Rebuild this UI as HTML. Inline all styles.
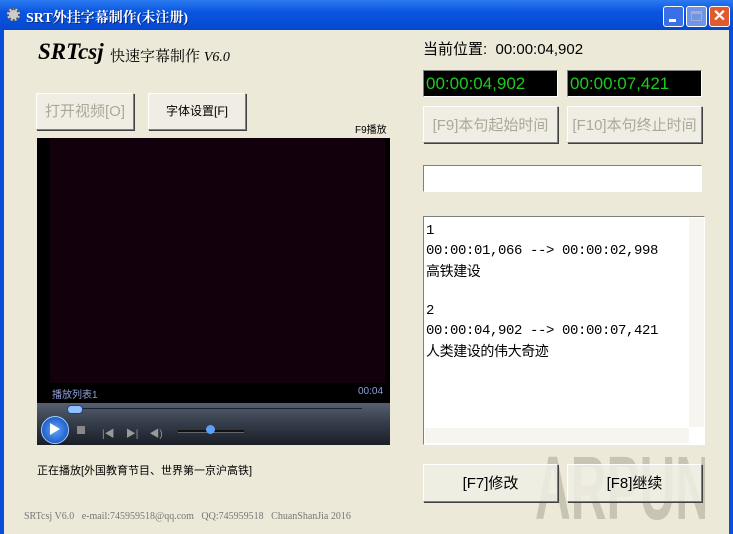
<html><head><style>
body{margin:0;width:733px;height:534px;overflow:hidden;background:#0a4fd8;font-family:"Liberation Sans","Noto Sans CJK SC",sans-serif;position:relative}
.a{position:absolute}
#body{left:4px;top:30px;width:725px;height:504px;background:#ece9d8}
.btn{position:absolute;background:#f0eee4;border:1px solid;border-color:#fff #808080 #808080 #fff;box-shadow:1px 1px 0 #404040;font-size:15px;text-align:center;box-sizing:border-box}
.dis{color:#aca899}
.green{position:absolute;background:#000;color:#21c821;font-size:17px;border:1px solid;border-color:#808080 #fff #fff #808080;box-sizing:border-box;padding:3px 0 0 2px}
.tb{position:absolute;top:6px;width:21px;height:21px;border:1px solid #fff;border-radius:3px;box-sizing:border-box;background:#3a6fe8}
</style></head><body>
<div class="a" style="left:0;top:0;width:733px;height:30px;background:linear-gradient(#2a7af0,#0a55e0 40%,#0548d0)"></div>
<div class="a" style="left:7px;top:8px;width:13px;height:13px;border-radius:50%;background:#ccc;border:2px dotted #555;box-sizing:border-box"></div>
<div class="a" style="left:26px;top:7px;color:#fff;font-weight:bold;font-size:14px;font-family:'Liberation Serif','Noto Serif CJK SC',serif;text-shadow:1px 1px #0a2a80">SRT外挂字幕制作(未注册)</div>
<div class="tb" style="left:663px"><div class="a" style="left:5px;top:12px;width:7px;height:3px;background:#fff"></div></div>
<div class="tb" style="left:686px;background:#6f95e8"><div class="a" style="left:4px;top:4px;width:11px;height:10px;border:1px solid #aac;border-top-width:3px;box-sizing:border-box"></div></div>
<div class="tb" style="left:709px;background:#e05a30;color:#fff;font-weight:bold;font-size:16px;text-align:center;line-height:19px">✕</div>
<div id="body" class="a"></div>
<div class="a" style="left:535px;top:444px;width:170px;height:90px;overflow:hidden"><div style="font-size:90px;font-weight:bold;color:#c8c4b4;line-height:90px;transform:scaleX(0.55);transform-origin:left;white-space:nowrap">ARPUN</div></div>
<div class="a" style="left:38px;top:39px;font-family:'Liberation Serif',serif;font-style:italic;font-weight:bold;font-size:23px">SRTcsj</div>
<div class="a" style="left:110px;top:45px;font-size:15px;font-family:'Noto Serif CJK SC',serif">快速字幕制作 <i style="font-family:'Liberation Serif',serif;font-size:14px">V6.0</i></div>
<div class="btn dis" style="left:36px;top:93px;width:98px;height:37px;line-height:35px">打开视频[O]</div>
<div class="btn" style="left:148px;top:93px;width:98px;height:37px;line-height:35px;font-size:12px">字体设置[F]</div>
<div class="a" style="left:355px;top:121px;font-size:10px">F9播放</div>
<div class="a" style="left:37px;top:138px;width:353px;height:307px;background:#000"></div>
<div class="a" style="left:50px;top:138px;width:335px;height:245px;background:#12000c"></div>
<div class="a" style="left:52px;top:386px;color:#8fa0d8;font-size:10px">播放列表1</div>
<div class="a" style="left:358px;top:386px;color:#8fa0d8;font-size:10px">00:04</div>
<div class="a" style="left:37px;top:403px;width:353px;height:42px;background:linear-gradient(#566070,#3a4250 40%,#1a1e26)"></div>
<div class="a" style="left:68px;top:408px;width:294px;height:1px;background:#1a2030"></div>
<div class="a" style="left:67px;top:405px;width:14px;height:7px;border-radius:4px;background:#8fc0ff;border:1px solid #204080"></div>
<div class="a" style="left:41px;top:416px;width:26px;height:26px;border-radius:50%;background:radial-gradient(#60a8ff,#0840b0);border:1px solid #9cf"></div>
<div class="a" style="left:50px;top:423px;width:0;height:0;border-left:10px solid #fff;border-top:6px solid transparent;border-bottom:6px solid transparent"></div>
<div class="a" style="left:77px;top:426px;width:8px;height:8px;background:#888"></div>
<div class="a" style="left:102px;top:425px;color:#999;font-size:10px">|◀ &nbsp;&nbsp; ▶| &nbsp;&nbsp; ◀)</div>
<div class="a" style="left:178px;top:430px;width:66px;height:2px;background:#111;border-bottom:1px solid #666"></div>
<div class="a" style="left:206px;top:425px;width:9px;height:9px;border-radius:50%;background:#5aa0ff"></div>
<div class="a" style="left:37px;top:462px;font-size:11px">正在播放[外国教育节目、世界第一京沪高铁]</div>
<div class="a" style="left:24px;top:511px;font-size:10px;color:#777;font-family:'Liberation Serif',serif">SRTcsj V6.0 &nbsp; e-mail:745959518@qq.com &nbsp; QQ:745959518 &nbsp; ChuanShanJia 2016</div>
<div class="a" style="left:423px;top:38px;font-size:15px">当前位置: &nbsp;00:00:04,902</div>
<div class="green" style="left:423px;top:70px;width:135px;height:27px">00:00:04,902</div>
<div class="green" style="left:567px;top:70px;width:135px;height:27px">00:00:07,421</div>
<div class="btn dis" style="left:423px;top:106px;width:135px;height:37px;line-height:37px">[F9]本句起始时间</div>
<div class="btn dis" style="left:567px;top:106px;width:135px;height:37px;line-height:37px">[F10]本句终止时间</div>
<div class="a" style="left:423px;top:165px;width:279px;height:27px;background:#fff;border:1px solid;border-color:#808080 #fff #fff #808080;box-sizing:border-box"></div>
<div class="a" style="left:423px;top:216px;width:282px;height:229px;background:#fff;border:1px solid;border-color:#808080 #fff #fff #808080;box-sizing:border-box"></div>
<div class="a" style="left:689px;top:218px;width:15px;height:209px;background:#f6f5ef"></div>
<div class="a" style="left:425px;top:428px;width:264px;height:15px;background:#f6f5ef"></div>
<div class="a" style="left:426px;top:221px;font-size:14px;line-height:20px;font-family:'Liberation Mono','Noto Sans CJK SC',monospace;white-space:pre;letter-spacing:-0.4px">1
00:00:01,066 --> 00:00:02,998
<span style="font-family:'Noto Sans CJK SC',sans-serif">高铁建设</span>

2
00:00:04,902 --> 00:00:07,421
<span style="font-family:'Noto Sans CJK SC',sans-serif">人类建设的伟大奇迹</span></div>
<div class="btn" style="left:423px;top:464px;width:135px;height:38px;line-height:38px;background:rgba(240,238,228,.85)">[F7]修改</div>
<div class="btn" style="left:567px;top:464px;width:135px;height:38px;line-height:38px;background:rgba(240,238,228,.85)">[F8]继续</div>
</body></html>
